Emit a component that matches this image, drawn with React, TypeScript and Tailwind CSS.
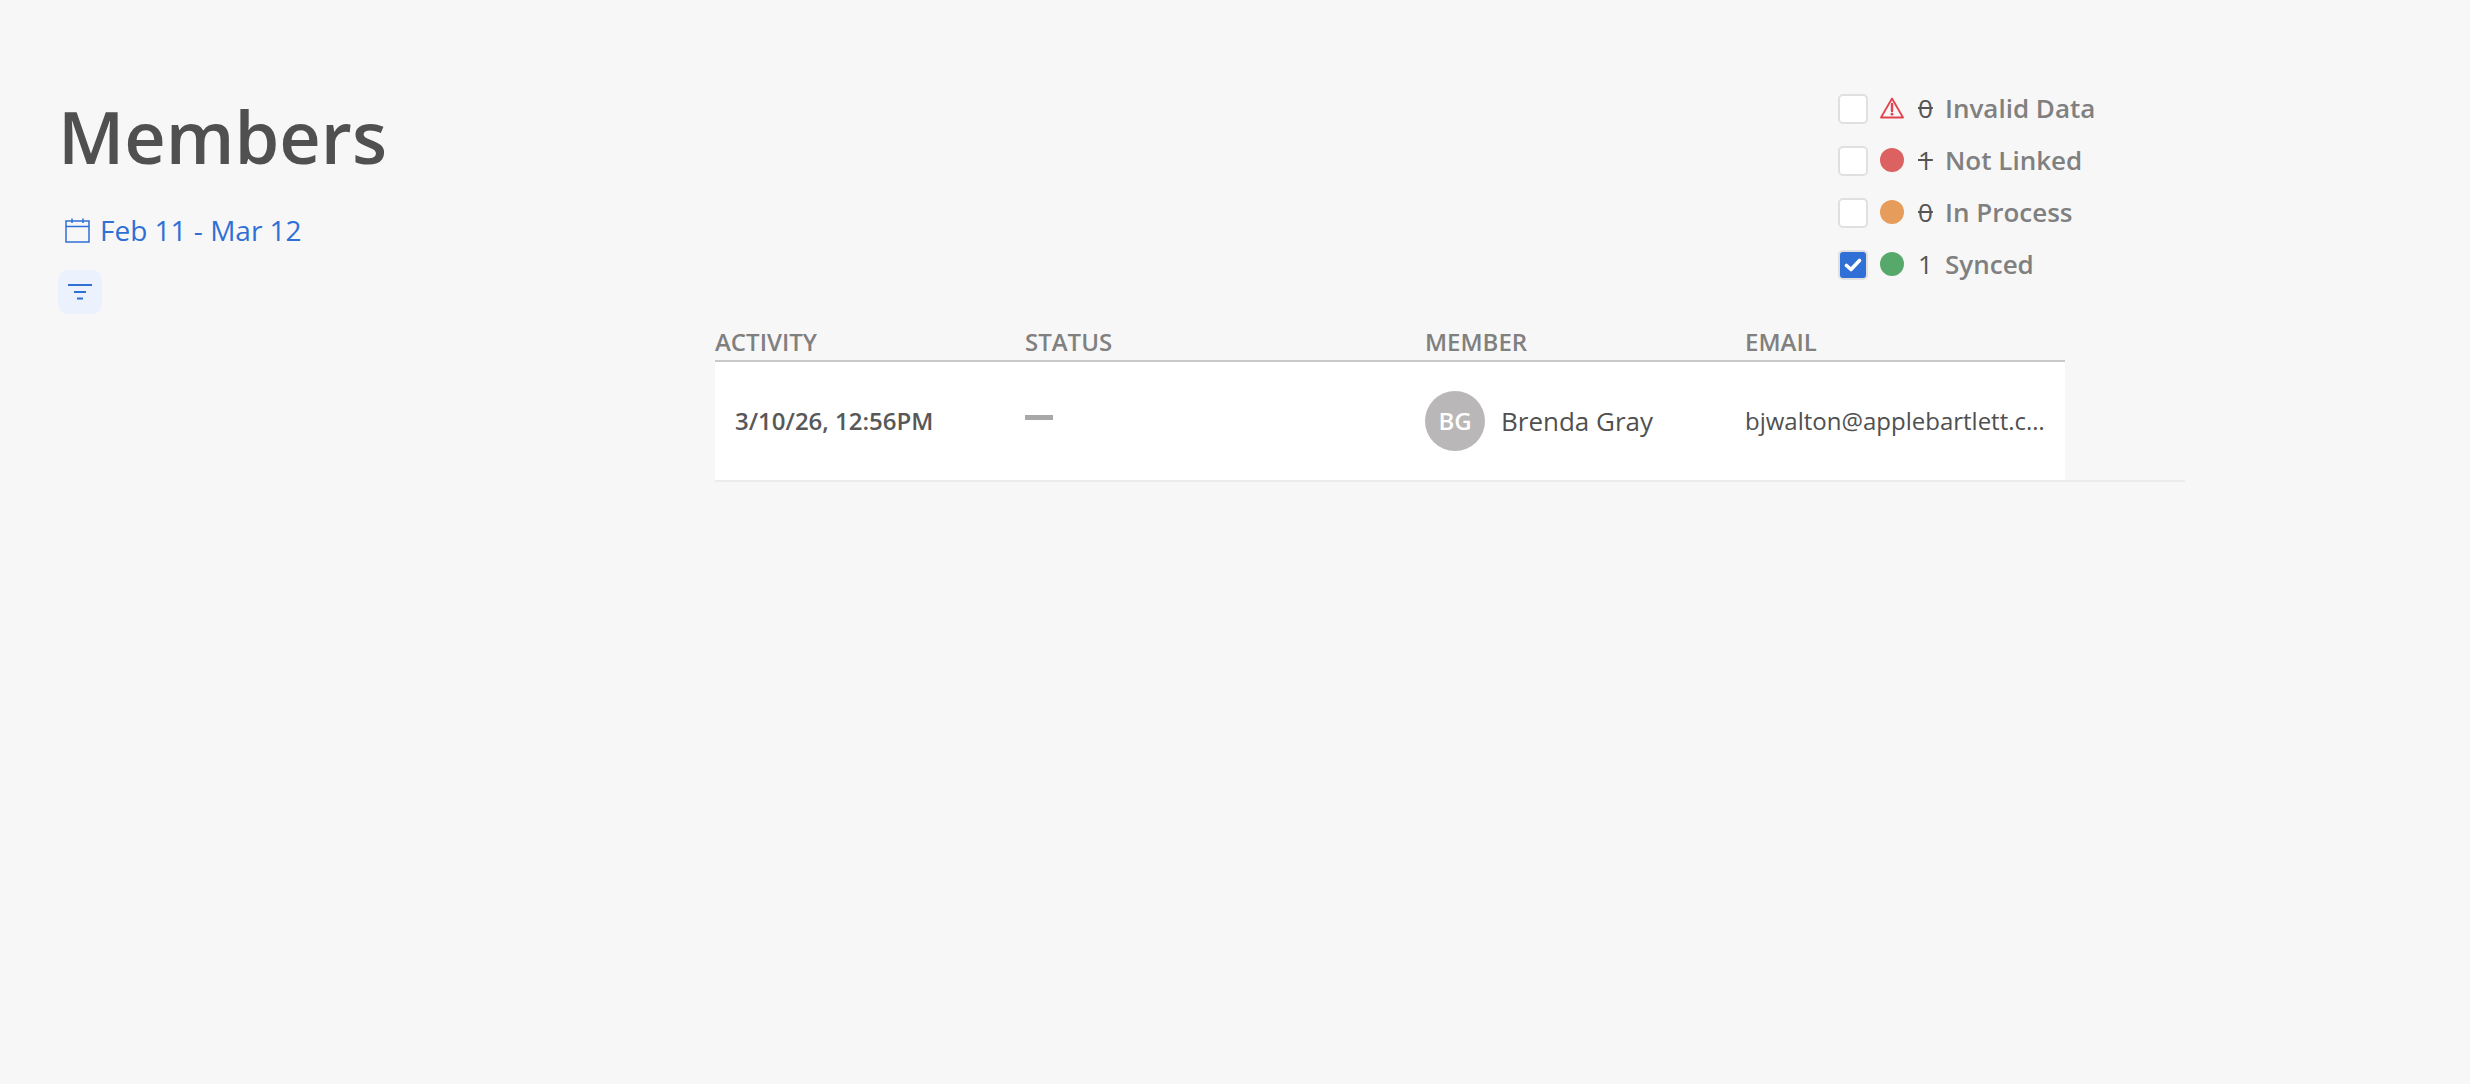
import React from "react";

const legend = [
  { count: "0", label: "Invalid Data", kind: "warn", off: true },
  { count: "1", label: "Not Linked", kind: "bg-[#dc6161]", off: true },
  { count: "0", label: "In Process", kind: "bg-[#e69c5a]", off: true },
  { count: "1", label: "Synced", kind: "bg-[#57a96b]", off: false },
];

const LegendRow = ({ count, label, kind, off }: { count: string; label: string; kind: string; off: boolean }) => {
  return (
    <div className="flex items-center h-[52px]">
      {off ? (
        <div className="w-[30px] h-[30px] rounded-[5px] border-2 border-[#e0e0e0] bg-white"></div>
      ) : (
        <div className="w-[30px] h-[30px] rounded-[5px] border-2 border-[#e0e0e0] bg-[#2f6fd6] flex items-center justify-center">
          <svg width="18" height="16" viewBox="0 0 18 16" fill="none">
            <path d="M2.5 8.5 L7 12.5 L15.5 3.5" stroke="white" strokeWidth="3.6" strokeLinecap="round" strokeLinejoin="round" />
          </svg>
        </div>
      )}
      <div className="ml-[12px] mb-[2px] w-[24px] h-[24px] flex items-center justify-center">
        {kind === "warn" ? (
          <svg width="24" height="22" viewBox="0 0 24 22" fill="none">
            <path d="M12 1.5 L23 20.5 H1 Z" stroke="#e2434f" strokeWidth="1.8" strokeLinejoin="round" />
            <path d="M12 7 V14" stroke="#e2434f" strokeWidth="2.4" strokeLinecap="round" />
            <circle cx="12" cy="17.2" r="1.4" fill="#e2434f" />
          </svg>
        ) : (
          <div className={`w-[24px] h-[24px] rounded-full ${kind}`}></div>
        )}
      </div>
      <span className={`ml-[14px] pb-[2px] w-[27px] text-[26px] font-medium text-[#555555] ${off ? "line-through" : ""}`}>{count}</span>
      <span className="pb-[2px] text-[26px] font-semibold text-[#808080]">{label}</span>
    </div>
  );
};

export default function App() {
  return (
    <div className="min-h-screen bg-[#f7f7f7] font-['Open_Sans',sans-serif]">
      <div className="flex pt-[83px]">
        {/* Title and date range */}
        <div className="pl-[58px] pt-[10px] w-[1838px]">
          <h1 className="text-[72px] leading-[86px] font-semibold text-[#505050]">Members</h1>
          <div className="flex items-center mt-[33px] ml-[7px] text-[#2f6fd6]">
            <svg width="25" height="25" viewBox="0 0 25 25" fill="none" stroke="#2f6fd6" strokeWidth="1.5">
              <rect x="1" y="3" width="23" height="21" />
              <path d="M1 8.5 H24 M7 0.5 V5 M18 0.5 V5" />
            </svg>
            <span className="ml-[10px] text-[28px] leading-[36px]">Feb 11 - Mar 12</span>
          </div>
          <div className="mt-[22px] w-[44px] h-[44px] rounded-[10px] bg-[#ebf2fd] flex items-center justify-center">
            <svg width="24" height="18" viewBox="0 0 24 18" fill="none" stroke="#2f6fd6" strokeWidth="2">
              <path d="M0 2 H24 M6 9 H18 M9 15.5 H15" />
            </svg>
          </div>
        </div>
        {/* Legend */}
        <div>
          {legend.map((item) => (
            <LegendRow key={item.label} {...item} />
          ))}
        </div>
      </div>

      {/* Table */}
      <div className="ml-[715px] w-[1470px] mt-[14px] border-b-2 border-[#ececec]">
        <div className="w-[1350px]">
          <div className="grid grid-cols-[310px_400px_320px_320px] h-[34px] border-b-2 border-[#c9c9c9] text-[24px] leading-[28px] font-semibold text-[#808080]">
            <div>ACTIVITY</div>
            <div>STATUS</div>
            <div>MEMBER</div>
            <div>EMAIL</div>
          </div>
          <div className="grid grid-cols-[310px_400px_320px_320px] h-[118px] bg-white items-center">
            <div className="pl-[20px] text-[24px] font-semibold text-[#585858]">3/10/26, 12:56PM</div>
            <div className="pb-[7px]">
              <div className="w-[28px] h-[5px] bg-[#a8a8a8]"></div>
            </div>
            <div className="flex items-center">
              <div className="w-[60px] h-[60px] rounded-full bg-[#b9b7b7] flex items-center justify-center text-[24px] font-semibold text-white">BG</div>
              <span className="ml-[16px] text-[26px] text-[#505050]">Brenda Gray</span>
            </div>
            <div className="text-[24px] text-[#505050] truncate pr-[18px]">bjwalton@applebartlett.com</div>
          </div>
        </div>
      </div>
    </div>
  );
}
